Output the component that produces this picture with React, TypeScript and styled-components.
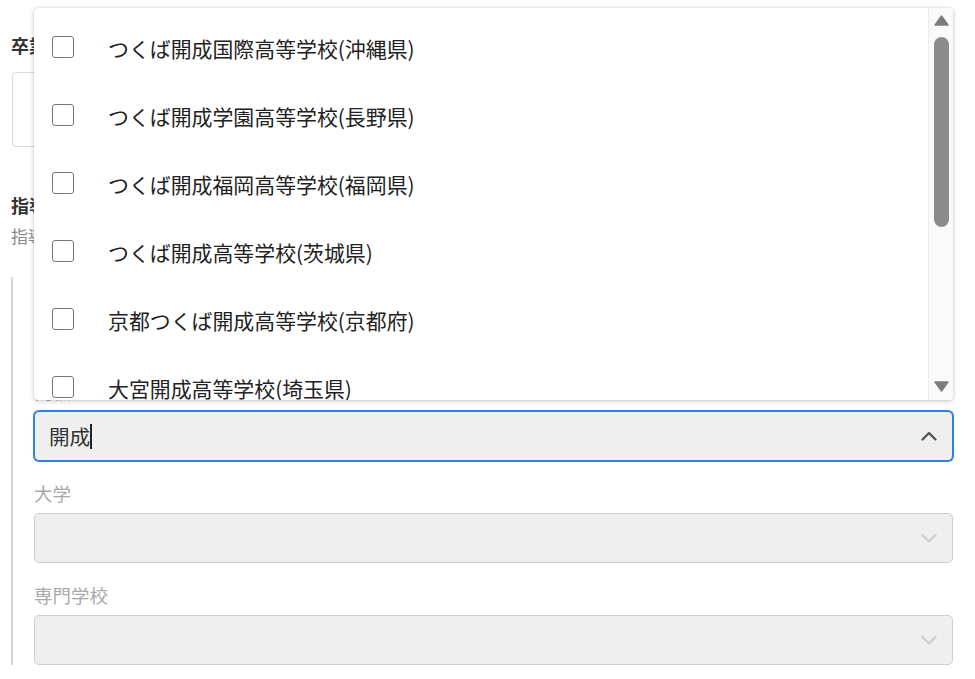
import React from "react";
import styled, { createGlobalStyle } from "styled-components";

const GlobalStyle = createGlobalStyle`
  html, body { margin: 0; padding: 0; background: #fff; }
  body { font-family: "Noto Sans CJK JP", "Noto Sans", sans-serif; color: #333; }
  * { box-sizing: border-box; }
`;

const Page = styled.div`
  position: relative;
  width: 975px;
  height: 679px;
  overflow: hidden;
  padding: 32px 22px 0 11px;
`;

const Heading = styled.h2<{ $gap?: number }>`
  margin: ${(p) => p.$gap ?? 0}px 0 0;
  font-size: 18px;
  line-height: 26px;
  font-weight: 700;
  color: #333;
`;

const TextBox = styled.div`
  margin: 14px 0 0 1px;
  height: 75px;
  border: 1px solid #d9d9d9;
  border-radius: 4px;
  background: #fff;
`;

const SubText = styled.p`
  margin: 6px 0 0;
  font-size: 17px;
  line-height: 24px;
  color: #8a8a8a;
`;

const Section = styled.div`
  margin-top: 29px;
  border-left: 2px solid #d6d6d6;
  padding: 2px 0 0 21px;
  display: flex;
  flex-direction: column;
  gap: 22px;
`;

const Field = styled.div`
  display: flex;
  flex-direction: column;
  gap: 10px;
`;

const Label = styled.label`
  font-size: 18.5px;
  line-height: 20px;
  color: #a9a9a9;
`;

const SelectBox = styled.div<{ $focused?: boolean }>`
  height: 50px;
  display: flex;
  align-items: center;
  justify-content: space-between;
  padding: 0 14px 0 14px;
  background: #efefef;
  border: 1px solid ${(p) => (p.$focused ? "#2f7fe6" : "#cfcfcf")};
  box-shadow: ${(p) => (p.$focused ? "0 0 0 1px #2f7fe6" : "none")};
  border-radius: 5px;
`;

const InputText = styled.span`
  font-size: 20.6px;
  line-height: 26px;
  color: #333;
  display: flex;
  align-items: center;
`;

const Caret = styled.span`
  display: inline-block;
  width: 2px;
  height: 25px;
  background: #222;
`;

const Popup = styled.div`
  position: absolute;
  left: 34px;
  top: 8px;
  width: 919px;
  height: 392px;
  background: #fff;
  border-radius: 4px;
  box-shadow: 0 1px 5px rgba(0, 0, 0, 0.22), 0 0 1px rgba(0, 0, 0, 0.25);
  display: flex;
  overflow: hidden;
  z-index: 10;
`;

const OptionList = styled.ul`
  flex: 1;
  margin: 0;
  padding: 5px 0 0;
  list-style: none;
  overflow: hidden;
`;

const Option = styled.li`
  height: 68px;
  display: flex;
  align-items: center;
  padding-left: 18px;
`;

const CheckBox = styled.span`
  width: 22px;
  height: 22px;
  border: 1.5px solid #777;
  border-radius: 3px;
  flex-shrink: 0;
  margin-right: 34px;
  background: #fff;
`;

const OptionText = styled.span`
  font-size: 20.9px;
  line-height: 28px;
  color: #222;
  padding-top: 1px;
`;

const Scrollbar = styled.div`
  width: 25px;
  flex-shrink: 0;
  background: #fafafa;
  border-left: 1px solid #ededed;
  display: flex;
  flex-direction: column;
  align-items: center;
  padding: 7px 0 8px;
`;

const Thumb = styled.div`
  margin-top: 11px;
  width: 15px;
  height: 190px;
  border-radius: 8px;
  background: #8c8c8c;
`;

const Spacer = styled.div`
  flex: 1;
`;

const Arrow = ({ down }: { down?: boolean }) => (
  <svg width="15" height="11" viewBox="0 0 15 11">
    <path
      d={down ? "M1 1 H14 L7.5 10 Z" : "M1 10 H14 L7.5 1 Z"}
      fill="#7d7d7d"
      stroke="#7d7d7d"
      strokeWidth="1.4"
      strokeLinejoin="round"
    />
  </svg>
);

const Chevron = ({ up, color }: { up?: boolean; color: string }) => (
  <svg width="18" height="12" viewBox="0 0 18 12">
    <polyline
      points={up ? "2.5,9.5 9,3 15.5,9.5" : "2.5,3 9,9.5 15.5,3"}
      fill="none"
      stroke={color}
      strokeWidth="2.4"
      strokeLinecap="round"
      strokeLinejoin="round"
    />
  </svg>
);

const schools = [
  "つくば開成国際高等学校(沖縄県)",
  "つくば開成学園高等学校(長野県)",
  "つくば開成福岡高等学校(福岡県)",
  "つくば開成高等学校(茨城県)",
  "京都つくば開成高等学校(京都府)",
  "大宮開成高等学校(埼玉県)",
];

export default function App() {
  return (
    <>
      <GlobalStyle />
      <Page>
        <Heading>卒業年度</Heading>
        <TextBox />
        <Heading $gap={45}>指導実績</Heading>
        <SubText>指導した生徒の進学先を選択してください</SubText>
        <Section>
          <Field>
            <Label>中学校</Label>
            <SelectBox>
              <span />
              <Chevron color="#cfcfcf" />
            </SelectBox>
          </Field>
          <Field>
            <Label>高校</Label>
            <SelectBox $focused>
              <InputText>
                開成
                <Caret />
              </InputText>
              <Chevron up color="#555" />
            </SelectBox>
          </Field>
          <Field>
            <Label>大学</Label>
            <SelectBox>
              <span />
              <Chevron color="#cfcfcf" />
            </SelectBox>
          </Field>
          <Field>
            <Label>専門学校</Label>
            <SelectBox>
              <span />
              <Chevron color="#cfcfcf" />
            </SelectBox>
          </Field>
        </Section>
        <Popup>
          <OptionList>
            {schools.map((s) => (
              <Option key={s}>
                <CheckBox />
                <OptionText>{s}</OptionText>
              </Option>
            ))}
          </OptionList>
          <Scrollbar>
            <Arrow />
            <Thumb />
            <Spacer />
            <Arrow down />
          </Scrollbar>
        </Popup>
      </Page>
    </>
  );
}
